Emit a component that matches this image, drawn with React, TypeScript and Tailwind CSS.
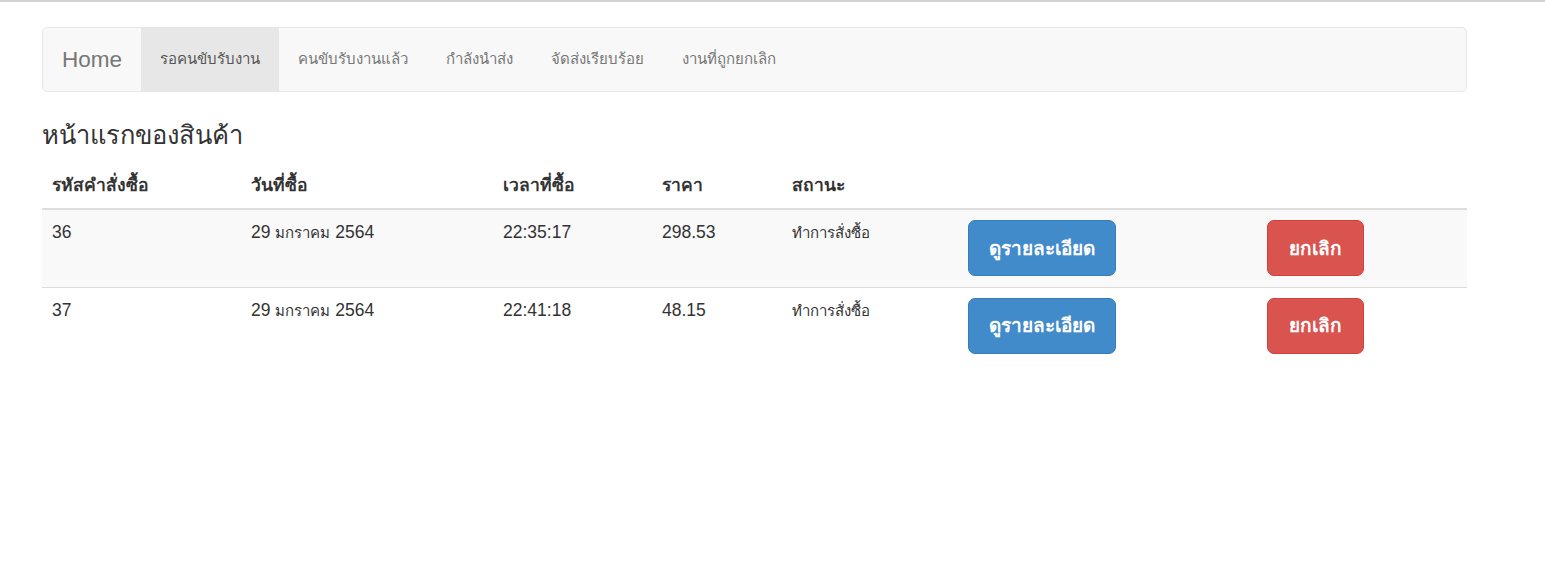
import React from "react";

interface Order {
  id: string;
  day: string;
  month: string;
  year: string;
  time: string;
  price: string;
  status: string;
}

const orders: Order[] = [
  { id: "36", day: "29", month: "มกราคม", year: "2564", time: "22:35:17", price: "298.53", status: "ทำการสั่งซื้อ" },
  { id: "37", day: "29", month: "มกราคม", year: "2564", time: "22:41:18", price: "48.15", status: "ทำการสั่งซื้อ" },
];

const navItems = ["รอคนขับรับงาน", "คนขับรับงานแล้ว", "กำลังนำส่ง", "จัดส่งเรียบร้อย", "งานที่ถูกยกเลิก"];

const App = () => {
  return (
    <div className="min-h-[567px] bg-white border-t-2 border-[#d4d4d4] font-['Liberation_Sans',Arial,sans-serif] text-[17.5px] text-[#333]">
      <div className="ml-[42px] w-[1425px] pt-[25px]">
        {/* navbar */}
        <nav className="flex h-[65px] bg-[#f8f8f8] border border-[#e7e7e7] rounded-[5px]">
          <a className="px-[19px] flex items-center text-[22.5px] text-[#777]">Home</a>
          {navItems.map((item, i) => (
            <a
              key={item}
              className={
                i === 0
                  ? "px-[19px] flex items-center text-[15px] text-[#555] bg-[#e7e7e7]"
                  : "px-[19px] flex items-center text-[15px] text-[#777]"
              }
            >
              {item}
            </a>
          ))}
        </nav>

        <h3 className="mt-[27px] mb-[11px] text-[25.5px] leading-[33px] font-normal">หน้าแรกของสินค้า</h3>

        <table className="w-full table-fixed border-collapse">
          <colgroup>
            <col className="w-[199px]" />
            <col className="w-[252px]" />
            <col className="w-[159px]" />
            <col className="w-[130px]" />
            <col className="w-[176px]" />
            <col className="w-[299px]" />
            <col className="w-[210px]" />
          </colgroup>
          <thead>
            <tr className="border-b-2 border-[#ddd]">
              <th className="p-[10px] text-left font-bold leading-[25px]">รหัสคำสั่งซื้อ</th>
              <th className="p-[10px] text-left font-bold leading-[25px]">วันที่ซื้อ</th>
              <th className="p-[10px] text-left font-bold leading-[25px]">เวลาที่ซื้อ</th>
              <th className="p-[10px] text-left font-bold leading-[25px]">ราคา</th>
              <th className="p-[10px] text-left font-bold leading-[25px]">สถานะ</th>
              <th className="p-[10px]"></th>
              <th className="p-[10px]"></th>
            </tr>
          </thead>
          <tbody>
            {orders.map((o, i) => (
              <tr key={o.id} className={i % 2 === 0 ? "bg-[#f9f9f9] h-[78px]" : "border-t border-[#ddd] h-[78px]"}>
                <td className="px-[10px] pt-[10px] align-top leading-[25px]">{o.id}</td>
                <td className="px-[10px] pt-[10px] align-top leading-[25px]">
                  {o.day} <span className="text-[15px]">{o.month}</span> {o.year}
                </td>
                <td className="px-[10px] pt-[10px] align-top leading-[25px]">{o.time}</td>
                <td className="px-[10px] pt-[10px] align-top leading-[25px]">{o.price}</td>
                <td className="px-[10px] pt-[10px] align-top leading-[25px] text-[15px]">{o.status}</td>
                <td className="px-[10px] pt-[10px] align-top">
                  <button className="h-[56px] px-[20px] pt-[2px] bg-[#428bca] border border-[#357ebd] rounded-[7px] text-white text-[19px] font-bold">
                    ดูรายละเอียด
                  </button>
                </td>
                <td className="px-[10px] pt-[10px] align-top">
                  <button className="h-[56px] px-[21px] pt-[2px] bg-[#d9534f] border border-[#d43f3a] rounded-[7px] text-white text-[19px] font-bold">
                    ยกเลิก
                  </button>
                </td>
              </tr>
            ))}
          </tbody>
        </table>
      </div>
    </div>
  );
};

export default App;
